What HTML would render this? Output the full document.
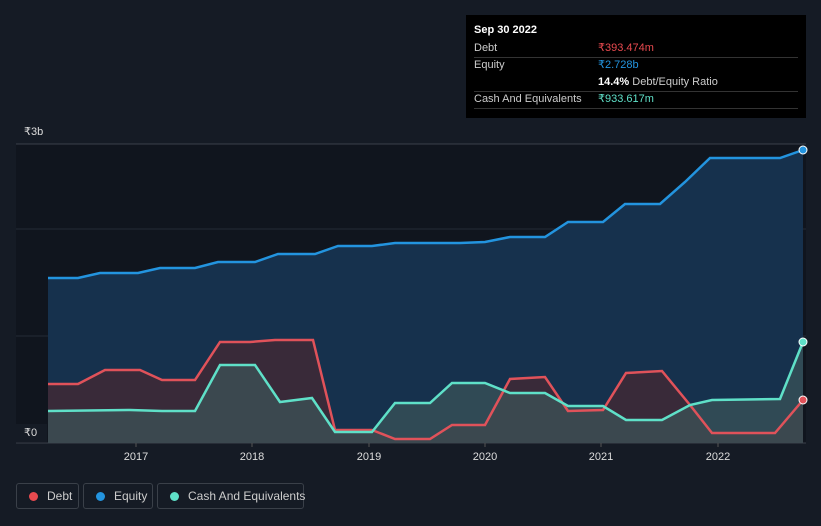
<!DOCTYPE html>
<html><head><style>
html,body{margin:0;width:821px;height:526px;overflow:hidden}
body{background:#151b25;font-family:"Liberation Sans",sans-serif;position:relative}
.tt{position:absolute;left:466px;top:15px;width:340px;height:103px;background:#000;color:#ccc;font-size:11px}
.tt .r{position:absolute;left:8px;right:8px;border-bottom:1px solid #333;height:17px;line-height:17px}
.lg{position:absolute;top:483px;height:26px;border:1px solid #3a4049;border-radius:3px;color:#ccc;font-size:12px;line-height:24px;box-sizing:border-box;white-space:nowrap}
.lg i{display:inline-block;width:9px;height:9px;border-radius:50%;margin:0 9px 0 12px;vertical-align:-1px}
</style></head><body>
<svg width="821" height="526" style="position:absolute;left:0;top:0">
<rect x="16" y="144" width="790" height="299" fill="#10151e"/>
<line x1="16" y1="144" x2="806" y2="144" stroke="#3a404a"/>
<line x1="16" y1="229" x2="806" y2="229" stroke="#252b35"/>
<line x1="16" y1="336" x2="806" y2="336" stroke="#252b35"/>
<line x1="16" y1="443" x2="806" y2="443" stroke="#3a404a"/>
<polygon fill="#16314d" points="48,278 78,278 100,273 138,273 160,268 195,268 218,262 255,262 278,254 315,254 338,246 372,246 395,243 460,243 485,242 510,237 545,237 568,222 603,222 625,204 660,204 685,182 710,158 780,158 803,150 803,443 48,443"/>
<polygon fill="#3d2a37" opacity="0.9" points="48,384 78,384 105,370 140,370 162,380 195,380 220,342 250,342 275,340 313,340 335,430 372,430 395,439 430,439 452,425 485,425 510,379 545,377 568,411 603,410 626,373 662,371 690,405 712,433 775,433 803,400 803,443 48,443"/>
<polygon fill="#3c5558" opacity="0.7" points="48,411 130,410 162,411 195,411 220,365 255,365 280,402 312,398 335,432 372,432 395,403 430,403 452,383 485,383 510,393 545,393 568,406 603,406 626,420 662,420 690,405 712,400 780,399 803,342 803,443 48,443"/>
<polyline fill="none" stroke="#2394df" stroke-width="2.5" points="48,278 78,278 100,273 138,273 160,268 195,268 218,262 255,262 278,254 315,254 338,246 372,246 395,243 460,243 485,242 510,237 545,237 568,222 603,222 625,204 660,204 685,182 710,158 780,158 803,150"/>
<polyline fill="none" stroke="#e0525a" stroke-width="2.5" points="48,384 78,384 105,370 140,370 162,380 195,380 220,342 250,342 275,340 313,340 335,430 372,430 395,439 430,439 452,425 485,425 510,379 545,377 568,411 603,410 626,373 662,371 690,405 712,433 775,433 803,400"/>
<polyline fill="none" stroke="#5fe0c8" stroke-width="2.5" points="48,411 130,410 162,411 195,411 220,365 255,365 280,402 312,398 335,432 372,432 395,403 430,403 452,383 485,383 510,393 545,393 568,406 603,406 626,420 662,420 690,405 712,400 780,399 803,342"/>
<circle cx="803" cy="150" r="4" fill="#2394df" stroke="#fff" stroke-width="1"/>
<circle cx="803" cy="400" r="4" fill="#e0525a" stroke="#fff" stroke-width="1"/>
<circle cx="803" cy="342" r="4" fill="#5fe0c8" stroke="#fff" stroke-width="1"/>
<rect x="16" y="424" width="31" height="18" fill="#151b25"/>
<g font-size="11" fill="#ddd"><text x="24" y="135">₹3b</text><text x="24" y="436">₹0</text></g>
<g font-size="11" fill="#ddd" text-anchor="middle">
<text x="136" y="460">2017</text><text x="252" y="460">2018</text><text x="369" y="460">2019</text><text x="485" y="460">2020</text><text x="601" y="460">2021</text><text x="718" y="460">2022</text></g>
<g stroke="#555"><line x1="136" y1="443" x2="136" y2="447"/><line x1="252" y1="443" x2="252" y2="447"/><line x1="369" y1="443" x2="369" y2="447"/><line x1="485" y1="443" x2="485" y2="447"/><line x1="601" y1="443" x2="601" y2="447"/><line x1="718" y1="443" x2="718" y2="447"/></g>
</svg>
<div class="tt">
<div style="position:absolute;left:8px;top:9px;color:#fff;font-weight:bold">Sep 30 2022</div>
<div class="r" style="top:25px">Debt<span style="position:absolute;left:124px;color:#e84a4f">₹393.474m</span></div>
<div class="r" style="top:42px;border:0">Equity<span style="position:absolute;left:124px;color:#2394df">₹2.728b</span></div>
<div class="r" style="top:59px"><span style="position:absolute;left:124px"><b style="color:#fff">14.4%</b> Debt/Equity Ratio</span></div>
<div class="r" style="top:76px">Cash And Equivalents<span style="position:absolute;left:124px;color:#5fe0c8">₹933.617m</span></div>
</div>
<div class="lg" style="left:16px;width:63px"><i style="background:#e84a4f"></i>Debt</div>
<div class="lg" style="left:83px;width:70px"><i style="background:#2394df"></i>Equity</div>
<div class="lg" style="left:157px;width:147px"><i style="background:#5fe0c8"></i>Cash And Equivalents</div>
</body></html>
